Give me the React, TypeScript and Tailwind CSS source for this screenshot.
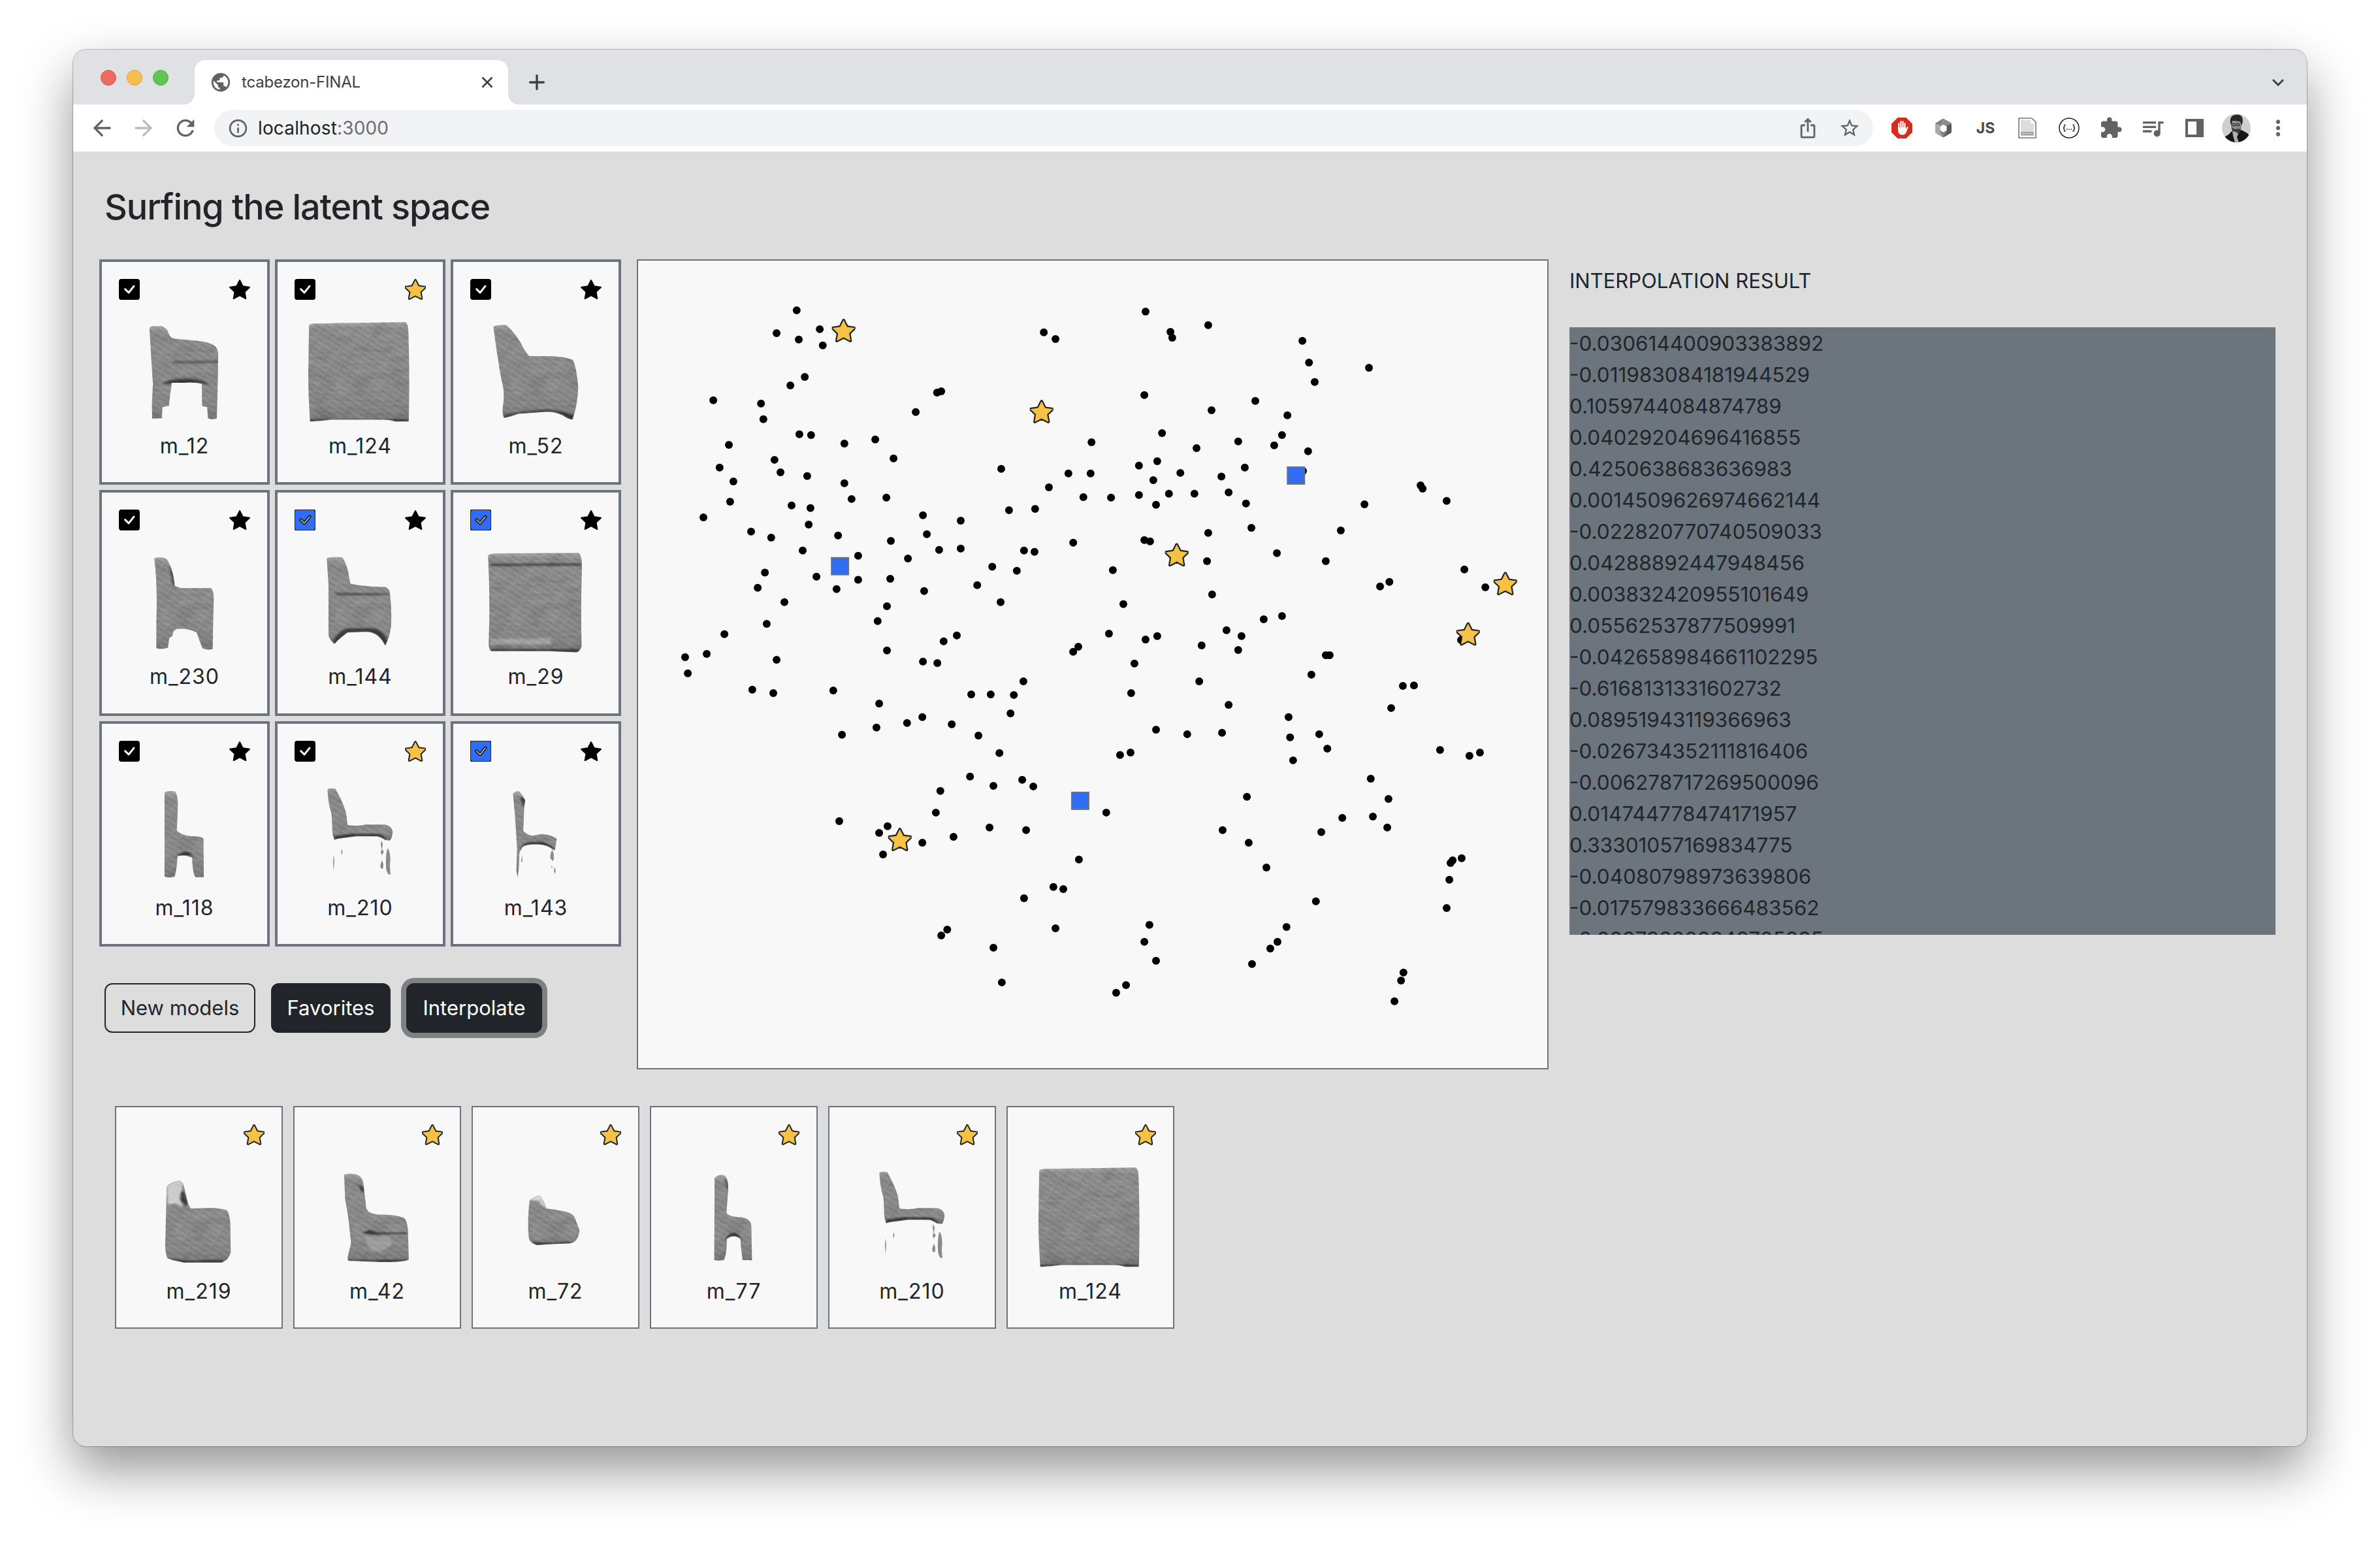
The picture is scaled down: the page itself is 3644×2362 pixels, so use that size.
import type { ReactNode } from "react";
import { BsCheckSquareFill, BsStarFill } from "react-icons/bs";
import {
  MdArrowBack,
  MdArrowForward,
  MdExtension,
  MdInfoOutline,
  MdIosShare,
  MdMoreVert,
  MdPublic,
  MdQueueMusic,
  MdRefresh,
  MdStarOutline,
} from "react-icons/md";

type Shape = { matrix: string; body: string; dark?: string; light?: string; glow?: number; specks?: string };

/* Side views of the generated chair meshes. */
const SHAPES: Record<string, Shape> = {
  m_12: {
    matrix: "translate(-16 -11) scale(.523 .4592)",
    body: "M170 245Q172 238 185 238L205 238Q222 245 226 262Q230 278 245 280L300 286Q345 290 362 305Q372 315 371 340L370 410L369 470L367 545Q355 552 341 545L339 508L324 504L323 430Q300 424 270 427L235 427L230 470L227 503L208 508L206 545L178 546L177 500L180 430Q174 330 170 245Z",
    dark: "M205 432Q225 412 280 414Q330 412 345 434L322 430L235 430Z M240 355L370 355L370 360L240 360Z",
  },
  m_124: {
    matrix: "translate(-285 -11) scale(.523 .4592)",
    body: "M637 235Q640 229 655 229L920 225Q928 232 928 260Q932 400 929 556L890 556Q870 548 850 550L700 550Q660 556 640 556Q634 450 635 380Z",
    dark: "M640 549L926 549L928 556L890 556Q870 548 850 550L700 550L640 556Z",
  },
  m_52: {
    matrix: "translate(-554 -11) scale(.523 .4592)",
    body: "M1177 240Q1185 233 1215 234Q1240 262 1255 290Q1270 325 1282 338L1340 338Q1395 340 1410 352Q1420 375 1425 440Q1424 500 1408 550Q1395 548 1380 535Q1355 522 1330 524L1250 530Q1225 540 1208 544Q1203 535 1204 510Q1210 470 1205 440Q1195 390 1192 360Q1183 300 1177 240Z",
    dark: "M1206 538Q1240 522 1340 516Q1390 524 1414 535L1408 548Q1395 548 1380 535Q1355 522 1330 524L1250 530L1208 544Z",
  },
  m_230: {
    matrix: "translate(-16 -364.33) scale(.523 .4592)",
    body: "M184 1012Q200 1006 219 1014Q240 1045 244 1105L262 1112L350 1112Q358 1118 358 1150L356 1240L355 1315Q340 1320 325 1312Q315 1285 308 1260Q285 1245 250 1248L240 1255L237 1272L228 1278L224 1310Q210 1318 190 1312L190 1230Q194 1100 184 1012Z",
    dark: "M228 1040Q240 1060 244 1105L238 1100Z",
  },
  m_144: {
    matrix: "translate(-285 -364.33) scale(.523 .4592)",
    body: "M689 1012Q705 1006 735 1010Q750 1035 755 1080L758 1097Q790 1106 860 1108Q874 1115 874 1130Q880 1190 877 1240Q872 1280 860 1304Q850 1280 835 1268Q820 1256 800 1258L750 1260Q725 1280 712 1298Q700 1290 694 1270L694 1100Z",
    dark: "M706 1290Q730 1245 760 1246L830 1246Q860 1260 866 1290L860 1304Q850 1280 835 1268Q820 1256 800 1258L750 1260L712 1298Z M710 1129L870 1130L870 1134L720 1134Z",
  },
  m_29: {
    matrix: "translate(-554 -364.33) scale(.523 .4592)",
    body: "M1161 1003Q1170 996 1200 996L1425 995Q1436 1000 1436 1040Q1432 1180 1435 1305Q1430 1328 1415 1326L1340 1322L1170 1322Q1162 1315 1163 1290Q1168 1150 1161 1003Z",
    dark: "M1168 1031L1434 1030L1434 1037L1168 1038Z M1168 1316L1432 1316L1425 1325L1168 1322Z",
    light: "M1168 1280L1345 1280L1345 1300L1168 1300Z",
    glow: 0.3,
  },
  m_118: {
    matrix: "translate(-16 -8) scale(.523 .3333)",
    body: "M214 340Q225 328 245 335Q253 350 253 400L250 515Q265 535 290 540Q322 538 328 552L329 728L305 728Q296 715 295 640Q275 622 252 632Q250 690 244 725Q230 735 214 725Z",
    dark: "M244 650Q255 614 275 612Q295 610 300 645L293 628L254 630Z",
  },
  m_210: {
    matrix: "translate(-285 -8) scale(.523 .3333)",
    body: "M691 325Q700 318 714 322Q735 380 745 430L750 490Q790 495 800 487L860 487Q880 495 882 520Q880 550 874 560L860 558Q845 540 830 541L775 541L720 552L711 557Q704 530 705 500L703 440Q693 390 691 325Z",
    dark: "M712 540L770 528L845 530L862 550L860 558Q845 540 830 541L775 541L720 552L711 557Z",
    specks:
      "M709 625Q713 660 709 695Q706 660 709 625Z M733 600Q737 612 733 624Q729 612 733 600Z M848 560L853 575L851 600L856 612L850 628L847 612L850 600L847 580Z M866 596Q874 600 875 650Q872 680 876 716Q866 720 863 690Q860 640 866 596Z M850 652Q857 665 853 690Q845 690 846 672Z",
  },
  m_143: {
    matrix: "translate(-554 -8) scale(.523 .3333)",
    body: "M1234 345Q1243 330 1253 335Q1262 350 1270 375L1267 410L1264 515Q1275 535 1290 538L1320 530Q1350 535 1362 552L1357 605L1350 600Q1335 580 1310 578Q1275 575 1262 590L1253 615L1251 690L1248 730L1244 700L1246 600Q1241 450 1234 345Z",
    dark: "M1250 610Q1262 570 1280 568L1320 566Q1350 580 1358 600L1350 602Q1335 580 1310 578Q1275 575 1262 590Z M1256 365Q1264 355 1270 375L1266 410Z",
    specks:
      "M1349 600L1353 620L1354 645L1350 655L1343 640L1344 622Z M1260 625L1262 658L1258 658Z M1356 680L1359 700L1357 714L1354 700Z M1347 675L1350 685L1346 685Z",
  },
  m_219: {
    matrix: "translate(-18 -25) scale(.5294 .3333)",
    body: "M180 440Q190 420 215 412Q228 420 230 440L242 520L250 540L310 537Q345 540 355 550Q363 570 364 620L365 740Q360 775 340 788L230 788Q200 780 182 768Q174 740 176 690Z",
    dark: "M185 768Q220 780 270 778L345 776L340 788L230 788Q200 780 185 768Z M222 465L230 460L241 520L236 530L220 500Z",
    light: "M180 440Q190 420 215 412L228 425L217 490L226 535L205 515L183 522Z",
    glow: 0.65,
  },
  m_42: {
    matrix: "translate(-291 -25) scale(.5294 .3333)",
    body: "M693 385Q715 375 735 388Q748 400 750 440L757 540Q765 568 800 568Q850 570 868 585Q878 605 878 660L880 775Q860 788 800 786L705 780L703 765L713 700Q705 560 696 500Z",
    dark: "M745 652L765 638L790 650L876 650L876 656L770 660Z M735 430L748 440L752 470L742 460Z M705 776L878 776L870 784L800 786L705 780Z",
    light: "M750 668L825 668L832 705L800 740L770 735Z",
    glow: 0.22,
  },
  m_72: {
    matrix: "translate(-564 -25) scale(.5294 .3333)",
    body: "M1229 505Q1240 485 1258 480Q1270 500 1278 540Q1300 543 1335 555Q1358 565 1362 590L1374 640Q1370 690 1350 700L1285 704L1250 708Q1232 698 1228 680Q1222 620 1229 505Z",
    dark: "M1232 692Q1270 702 1350 692L1345 701L1285 704L1250 708Z",
    light: "M1232 502Q1240 485 1258 480Q1270 500 1278 540L1262 520L1258 505Z",
    glow: 0.75,
  },
  m_77: {
    matrix: "translate(-17 -25) scale(.5357 .3333)",
    body: "M213 400Q225 380 240 387Q253 400 252 450L247 560Q255 578 290 580Q318 590 318 620L320 778L293 776Q288 720 287 680Q268 655 248 680Q248 750 240 776Q225 782 212 776Z",
    dark: "M242 690Q250 652 268 650Q285 652 292 690L287 680Q268 655 248 680Z M242 400L252 430L251 465Z",
  },
};

type Model = { id: string; starred?: boolean; picked?: boolean };

const MODELS: Model[] = [
  { id: "m_12" },
  { id: "m_124", starred: true },
  { id: "m_52" },
  { id: "m_230" },
  { id: "m_144", picked: true },
  { id: "m_29", picked: true },
  { id: "m_118" },
  { id: "m_210", starred: true },
  { id: "m_143", picked: true },
];

const FAVORITES = ["m_219", "m_42", "m_72", "m_77", "m_210", "m_124"];

const RESULT = [
  "-0.030614400903383892",
  "-0.011983084181944529",
  "0.1059744084874789",
  "0.04029204696416855",
  "0.4250638683636983",
  "0.0014509626974662144",
  "-0.022820770740509033",
  "0.04288892447948456",
  "0.003832420955101649",
  "0.05562537877509991",
  "-0.042658984661102295",
  "-0.6168131331602732",
  "0.08951943119366963",
  "-0.026734352111816406",
  "-0.006278717269500096",
  "0.014744778474171957",
  "0.33301057169834775",
  "-0.04080798973639806",
  "-0.017579833666483562",
  "-0.028738909849705885",
];

/* The latent map is stored as four tiles, each with its own origin. */
type Tile = { x: number; y: number; dots: number[]; stars: number[]; squares: number[] };
const UNIT_X = 720 / 1568;
const UNIT_Y = 640 / 1568;
const TILES: Tile[] = [
  {
    x: -5, y: -7,
    dots: [544,208,477,294,551,318,621,279,631,340,571,458,523,490,266,546,425,558,433,617,553,673,592,676,318,713,703,708,806,693,867,764,470,769,287,798,490,816,333,850,579,830,703,857,322,926,727,916,843,911,527,940,590,950,233,985,584,1012,392,1038,459,1061,682,1053,564,1109,749,1129,858,1073,965,977,978,1048,1019,1107,1091,997,1091,1102,915,1139,438,1192,610,1207,749,1219,677,1254,856,1215,414,1249,503,1303,969,1261,845,1318,814,1374,444,1384,303,1423,244,1497,172,1509,477,1519,845,1484,965,1526,1013,1531,1034,1450,1078,1428,1146,1239,1196,1170,1224,1303,1278,1185,1302,1109,1337,1114,1252,958,1339,953,1385,872,1226,803,1450,820,1524,820,1527,703,1500,909,1466,1080,1466,1489,1483,1470,1012,517,1026,512,941,590,1368,291,1407,316],
    stars: [700.5, 284, 1360.5, 588],
    squares: [688.5, 1168],
  },
  {
    x: 705, y: -7,
    dots: [161,213,244,289,250,311,370,264,684,323,706,404,725,477,906,424,157,526,527,548,381,583,634,602,216,669,616,676,590,715,470,700,331,725,703,737,139,791,200,774,187,845,277,818,414,832,492,798,686,811,46,911,139,901,239,896,324,896,196,938,438,891,496,933,514,1024,370,1043,157,1070,176,1075,366,1149,599,1119,762,1149,812,1034,891,936,1078,865,1085,877,1165,923,52,1183,87,1310,383,1274,555,1367,616,1355,431,1408,481,1430,470,1482,348,1465,161,1443,200,1430,39,1421,124,1533,762,1502,775,1502,943,1244,974,1227,1224,1180,1294,1247,1213,1445],
    stars: [265, 1125, 1360.5, 1233, 1236.5, 1422],
    squares: [662.5, 828],
  },
  {
    x: -5, y: 613,
    dots: [181,51,396,112,466,125,666,115,819,164,810,254,695,281,912,237,963,215,1061,242,1150,284,1126,130,1191,130,1268,132,1300,81,1257,201,1220,350,1122,438,1200,473,1296,450,1333,475,1023,492,1008,573,686,605,847,624,819,649,832,730,963,686,1067,664,1187,629,1309,639,1485,749,1400,852,1433,860,1302,894,1407,1007,1046,1012,1026,1034,1200,1080,1228,1210],
    stars: [888, 674],
    squares: [1489.5, 529],
  },
  {
    x: 705, y: 613,
    dots: [340,81,113,125,714,56,1019,98,1056,96,980,181,438,169,638,215,196,262,300,279,416,274,643,291,740,279,767,333,653,377,76,357,111,348,1143,338,1241,360,1276,348,912,446,971,522,499,514,30,573,817,593,919,588,967,629,747,646,418,639,505,686,564,779,1185,752,1178,762,1215,744,1174,825,1165,931,729,906,174,994,157,1058,196,1129,96,1220,63,1249,631,1002,601,1058,577,1083,516,1141,1021,1173,1013,1203,991,1281],
    stars: [],
    squares: [],
  },
];

function place(tile: Tile, flat: number[]) {
  const out: { x: number; y: number }[] = [];
  for (let i = 0; i < flat.length; i += 2) {
    out.push({ x: tile.x + flat[i] * UNIT_X, y: tile.y + flat[i + 1] * UNIT_Y });
  }
  return out;
}

const DOTS = TILES.flatMap((t) => place(t, t.dots));
const STARS = TILES.flatMap((t) => place(t, t.stars));
const SQUARES = TILES.flatMap((t) => place(t, t.squares));

function MeshDefs() {
  return (
    <svg className="absolute size-0" aria-hidden="true">
      <defs>
        <linearGradient id="mesh" x1="0" y1="0" x2="0" y2="1">
          <stop offset="0" stopColor="#a6a6a6" />
          <stop offset=".06" stopColor="#8c8c8c" />
          <stop offset=".85" stopColor="#868686" />
          <stop offset="1" stopColor="#747474" />
        </linearGradient>
        <filter id="grain" x="-5%" y="-5%" width="110%" height="110%" colorInterpolationFilters="sRGB">
          <feTurbulence type="fractalNoise" baseFrequency=".035 .1" numOctaves={2} seed={4} result="noise" />
          <feColorMatrix
            in="noise"
            type="matrix"
            values=".28 0 0 0 .36  .28 0 0 0 .36  .28 0 0 0 .36  0 0 0 0 1"
            result="grey"
          />
          <feBlend in="grey" in2="SourceGraphic" mode="soft-light" result="lit" />
          <feComposite in="lit" in2="SourceAlpha" operator="in" result="cut" />
          <feGaussianBlur in="cut" stdDeviation=".7" />
        </filter>
        <filter id="smudge" x="-20%" y="-50%" width="140%" height="200%">
          <feGaussianBlur stdDeviation="3" />
        </filter>
        <pattern id="ridges" width="14" height="8" patternUnits="userSpaceOnUse" patternTransform="rotate(32)">
          <path d="M0 2.5H10" stroke="#6b6b6b" strokeWidth="2.4" opacity=".32" />
          <path d="M3 6H13" stroke="#a5a5a5" strokeWidth="2" opacity=".25" />
        </pattern>
      </defs>
    </svg>
  );
}

function Mesh({ id, scope }: { id: string; scope: string }) {
  const s = SHAPES[id];
  const clip = `${scope}-${id}`;
  return (
    <svg viewBox="0 80 253 172" className="mt-[22px] h-[172px] w-[253px]">
      <clipPath id={clip}>
        <path d={s.body} transform={s.matrix} />
      </clipPath>
      <g filter="url(#grain)">
        <path d={s.body} transform={s.matrix} fill="url(#mesh)" />
        <g clipPath={`url(#${clip})`}>
          <rect x="0" y="80" width="253" height="172" fill="url(#ridges)" />
          {s.light && (
            <path d={s.light} transform={s.matrix} fill="#f0f0f0" opacity={s.glow} filter="url(#smudge)" />
          )}
          {s.dark && <path d={s.dark} transform={s.matrix} fill="#1c1c1c" opacity=".7" filter="url(#smudge)" />}
        </g>
        {s.specks && <path d={s.specks} transform={s.matrix} fill="#8a8a8a" />}
      </g>
    </svg>
  );
}

const BLACK_STAR = "size-8 fill-black";
const GOLD_STAR = "size-8 fill-[#f7c244] stroke-[#212529] stroke-1";

function ModelCard({ model, scope, thin }: { model: Model; scope: string; thin?: boolean }) {
  return (
    <div
      className={
        thin
          ? "flex h-[341px] w-[257px] flex-col items-center border-2 border-[#6c757d] bg-[#f8f8f8] pt-[26px]"
          : "flex h-[345.33px] w-[261px] flex-col items-center border-4 border-[#6c757d] bg-[#f8f8f8] pt-[26px]"
      }
    >
      <div className="flex h-8 w-[201px] justify-between">
        {thin ? (
          <span />
        ) : (
          <BsCheckSquareFill
            className={model.picked ? "size-8 fill-[#306df5] stroke-[#212529] stroke-1" : "size-8 fill-black"}
          />
        )}
        <BsStarFill className={model.starred ? GOLD_STAR : BLACK_STAR} />
      </div>
      <Mesh id={model.id} scope={scope} />
      <span className="mt-[6px] text-[32px] leading-[48px] tracking-[1px]">{model.id}</span>
    </div>
  );
}

function LatentMap() {
  return (
    <div className="h-[1240px] w-[1396px] border-2 border-[#6c757d] bg-[#f8f8f8]">
      <svg viewBox="2 2 1392 1236" className="h-[1236px] w-[1392px]">
        {DOTS.map((d, i) => (
          <circle key={i} cx={d.x} cy={d.y} r="6" />
        ))}
        {SQUARES.map((d, i) => (
          <rect
            key={i}
            x={d.x - 13}
            y={d.y - 13}
            width="26"
            height="26"
            fill="#306df5"
            stroke="#6c757d"
            strokeWidth="2"
          />
        ))}
        {STARS.map((d, i) => (
          <BsStarFill
            key={i}
            x={d.x - 18}
            y={d.y - 18}
            size={36}
            className="fill-[#f7c244] stroke-[#212529] stroke-1"
          />
        ))}
      </svg>
    </div>
  );
}

function Slot({ children }: { children: ReactNode }) {
  return <div className="flex h-[72px] w-16 items-center justify-center">{children}</div>;
}

function Extensions() {
  return (
    <>
      <Slot>
        <svg viewBox="0 0 32 32" className="size-8">
          <path d="M9.500 0h13L32 9.500v13L22.500 32h-13L0 22.500v-13z" fill="#d62d20" />
          <path
            d="M11.300 9v9M14.400 6v11M17.500 6v11M20.500 9v9"
            stroke="#fff"
            strokeWidth="2.200"
            strokeLinecap="round"
          />
          <path
            d="M10.200 15h11.400v3l1.900-3.500c.8-.9 2.200-.2 1.800 1.200L22.800 22c-1 2.900-3 4.500-6.100 4.500-4.100 0-6.500-3-6.500-7z"
            fill="#fff"
          />
        </svg>
      </Slot>
      <Slot>
        <svg viewBox="0 0 30 32" className="h-8 w-[30px]">
          <path d="M14 1.500l11.500 6q1.500 1 1.500 3v10q0 2-1.500 3L14 30.500l-10-6q-2-1-2-3v-11q0-2 2-3z" fill="#808080" />
          <path d="M14 1.500l12 6.500-5 5-7-4-5 3z" fill="#8f8f8f" />
          <path d="M2 10l7 1v10l5 9.500-10-6q-2-1-2-3z" fill="#aaa" />
          <path d="M27 10v11q0 2-1.500 3L14 30.500l6-9.500v-9z" fill="#5a5a5a" />
          <path d="M14.500 10.500l5 3v6l-5 3-5-3v-6z" fill="#fff" />
        </svg>
      </Slot>
      <Slot>
        <span className="text-[23px] font-bold text-[#4a4b4d]">JS</span>
      </Slot>
      <Slot>
        <svg viewBox="0 0 28 32" className="h-8 w-7">
          <path d="M1 1h20l6 6v24H1z" fill="#fbfbfb" stroke="#777" strokeWidth="1.600" />
          <path d="M4 4h15v5h5v19H4z" fill="#dcdcdc" />
          <path d="M5 22.500h18v4H5z" fill="#bbb" stroke="#888" strokeWidth="1" />
        </svg>
      </Slot>
      <Slot>
        <svg viewBox="0 0 32 32" className="size-8" fill="none" stroke="#202124">
          <circle cx="16" cy="16" r="15" strokeWidth="1.500" />
          <path
            d="M10.500 11c-2 0-2 1-2 2.500s0 2.500-1.500 2.500c1.500 0 1.500 1 1.500 2.500s0 2.500 2 2.500M21.500 11c2 0 2 1 2 2.500s0 2.500 1.500 2.500c-1.500 0-1.500 1-1.500 2.500s0 2.500-2 2.500"
            strokeWidth="1.500"
          />
          <path d="M12 18h1.500M15.250 18h1.500M18.500 18H20" strokeWidth="1.500" />
        </svg>
      </Slot>
      <Slot>
        <MdExtension className="size-9 text-[#5f6368]" />
      </Slot>
      <Slot>
        <MdQueueMusic className="size-10 text-[#5f6368]" />
      </Slot>
      <Slot>
        <svg viewBox="0 0 28 28" className="size-7">
          <path d="M0 0h28v28H0zM4 4v20h13V4z" fill="#5f6368" fillRule="evenodd" />
        </svg>
      </Slot>
      <Slot>
        <svg viewBox="0 0 44 44" className="size-11 rounded-full">
          <rect width="44" height="44" fill="#cfcfcf" />
          <path d="M0 44V38l10-6 6-6 14-1 9 5 5 6v8z" fill="#161616" />
          <path d="M14 12h15l1 9-3 8-5 4-5-3-3-8z" fill="#8c8c8c" />
          <path d="M13 15q-2-11 6-13 10-2 12 4 2 6-1 12l-2-6-12-1-2 6z" fill="#262626" />
          <path d="M15 21l5 3 8-1 1-4-1 9-5 4-6-3z" fill="#3a3a3a" />
          <path d="M15 15.500h5v3h-5zM22 15.500h5v3h-5z" fill="none" stroke="#222" strokeWidth="1" />
          <path d="M16 27l6 1 3 3-2 5 3 8h-6l-3-10z" fill="#b0b0b0" />
        </svg>
      </Slot>
      <Slot>
        <MdMoreVert className="size-[38px] text-[#5f6368]" />
      </Slot>
    </>
  );
}

function Browser() {
  return (
    <header>
      <div className="flex h-[84px] items-end bg-[#dfe1e5]">
        <div className="flex h-[84px] w-[186px] items-center gap-4 pt-[2px] pl-[42px]">
          <span className="size-6 rounded-full border border-[#d5574c] bg-[#ed6a5e]" />
          <span className="size-6 rounded-full border border-[#dca63c] bg-[#f5bf4f]" />
          <span className="size-6 rounded-full border border-[#52ae46] bg-[#61c554]" />
        </div>
        <div className="relative flex h-[68px] w-[480px] items-center rounded-t-2xl bg-white pl-[23px] text-[#3c4043]">
          <span className="absolute bottom-0 -left-4 size-4 bg-[radial-gradient(circle_at_0_0,transparent_15.5px,#fff_16px)]" />
          <span className="absolute -right-4 bottom-0 size-4 bg-[radial-gradient(circle_at_100%_0,transparent_15.5px,#fff_16px)]" />
          <MdPublic className="size-[34px] text-[#5f6368]" />
          <span className="ml-[15px] text-[24px] leading-none tracking-[-0.2px]">tcabezon-FINAL</span>
          <svg viewBox="0 0 18 18" className="mr-[23px] ml-auto size-[18px]" stroke="#3c4043" strokeWidth="2.600">
            <path d="M1.500 1.500l15 15M16.500 1.500l-15 15" />
          </svg>
        </div>
        <div className="flex h-[68px] flex-1 items-center justify-between pr-[35px] pl-8">
          <svg viewBox="0 0 24 24" className="size-6" stroke="#3c4043" strokeWidth="3.400" strokeLinecap="round">
            <path d="M12 1.700v20.600M1.700 12h20.600" />
          </svg>
          <svg viewBox="0 0 18 12" className="h-3 w-[18px]" fill="none" stroke="#3c4043" strokeWidth="3">
            <path d="M1 2l8 8 8-8" />
          </svg>
        </div>
      </div>
      <div className="flex h-[72px] items-center bg-white pl-3 text-[#5f6368]">
        <Slot>
          <MdArrowBack className="size-10" />
        </Slot>
        <Slot>
          <MdArrowForward className="size-10 text-[#babcbe]" />
        </Slot>
        <Slot>
          <MdRefresh className="size-10" />
        </Slot>
        <div className="ml-3 flex h-14 w-[2540px] items-center rounded-full bg-[#f1f3f4] pl-5">
          <MdInfoOutline className="size-[33px]" />
          <span className="ml-[14px] text-[28px] leading-none tracking-[0.15px] text-[#202124]">
            localhost<span className="text-[#6b6e72]">:3000</span>
          </span>
          <div className="mr-1 ml-auto flex">
            <Slot>
              <MdIosShare className="size-[34px]" />
            </Slot>
            <Slot>
              <MdStarOutline className="size-[34px]" />
            </Slot>
          </div>
        </div>
        <div className="ml-3 flex">
          <Extensions />
        </div>
      </div>
    </header>
  );
}

export default function App() {
  return (
    <div className="h-[2362px] w-[3644px] overflow-hidden bg-white px-[112px] pt-[76px] font-[Inter,'Liberation_Sans',sans-serif] text-[#212529]">
      <MeshDefs />
      <div className="h-[2138px] overflow-hidden rounded-[20px] bg-[#dddddd] shadow-[0_0_0_1px_rgba(0,0,0,0.25),0_36px_80px_rgba(0,0,0,0.42)]">
        <Browser />
        <main className="pt-[51px] pl-10">
          <h1 className="pl-2 text-[54px] leading-[67px] font-medium tracking-[-1.1px]">Surfing the latent space</h1>
          <div className="mt-[47px] flex">
            <section className="w-[823px]">
              <div className="grid w-[799px] grid-cols-3 gap-2">
                {MODELS.map((m) => (
                  <ModelCard key={m.id} model={m} scope="grid" />
                ))}
              </div>
              <div className="mt-14 flex gap-6 pl-2 text-[31px]">
                <button className="h-[76px] w-[231px] rounded-xl border-2 border-[#212529]">New models</button>
                <button className="h-[76px] w-[183px] rounded-xl bg-[#212529] text-white">Favorites</button>
                <button className="h-[76px] w-[208px] rounded-xl bg-[#212529] text-white ring-8 ring-[#7f8081]">
                  Interpolate
                </button>
              </div>
            </section>
            <LatentMap />
            <section className="ml-8 w-[1081px] pt-[9px] text-[31px] leading-[48px]">
              <h2>INTERPOLATION RESULT</h2>
              <div className="mt-[47px] h-[930px] overflow-hidden bg-[#6c757d] pt-px text-[31.5px]">
                {RESULT.map((v) => (
                  <div key={v}>{v}</div>
                ))}
              </div>
            </section>
          </div>
          <div className="mt-14 flex gap-4 pl-6">
            {FAVORITES.map((id) => (
              <ModelCard key={id} model={{ id, starred: true }} scope="fav" thin />
            ))}
          </div>
        </main>
      </div>
    </div>
  );
}
